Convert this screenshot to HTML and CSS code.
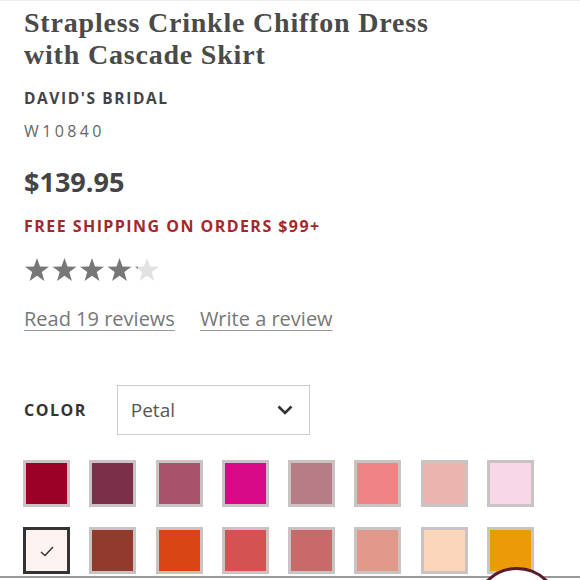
FILE: index.html
```html
<!DOCTYPE html>
<html>
<head>
<meta charset="utf-8">
<link rel="stylesheet" href="styles.css">
</head>
<body>
<div class="page">
  <h1 class="title">Strapless Crinkle Chiffon Dress<br>with Cascade Skirt</h1>
  <div class="brand">DAVID'S BRIDAL</div>
  <div class="sku">W10840</div>
  <div class="price">$139.95</div>
  <div class="ship">FREE SHIPPING ON ORDERS $99+</div>
  <div class="stars">
    <svg width="140" height="26" viewBox="0 0 140 26">
      <defs>
        <path id="st" d="M13 1 L16 9.6 L25 9.7 L17.8 15.1 L20.4 24 L13 18.8 L5.6 24 L8.2 15.1 L1 9.7 L10 9.6 Z"/>
        <linearGradient id="part" x1="0" x2="1" y1="0" y2="0">
          <stop offset="0.12" stop-color="#7a7a7a"/>
          <stop offset="0.12" stop-color="#e2e2e2"/>
        </linearGradient>
      </defs>
      <use href="#st" x="0" fill="#777"/>
      <use href="#st" x="27.5" fill="#777"/>
      <use href="#st" x="55" fill="#777"/>
      <use href="#st" x="82.5" fill="#777"/>
      <use href="#st" x="110" fill="url(#part)"/>
    </svg>
  </div>
  <div class="links">
    <a class="link">Read 19 reviews</a>
    <a class="link">Write a review</a>
  </div>
  <div class="color-row">
    <span class="color-label">COLOR</span>
    <div class="select">
      <span>Petal</span>
      <svg width="16" height="10" viewBox="0 0 16 10"><path d="M1.5 1.5 L8 8 L14.5 1.5" fill="none" stroke="#333" stroke-width="2.6"/></svg>
    </div>
  </div>
  <div class="swatches">
    <div class="sw" style="background:#9b0127"></div>
    <div class="sw" style="background:#7b2f49"></div>
    <div class="sw" style="background:#a9536a"></div>
    <div class="sw" style="background:#d90a87"></div>
    <div class="sw" style="background:#b67d87"></div>
    <div class="sw" style="background:#f08485"></div>
    <div class="sw" style="background:#e9b4ad"></div>
    <div class="sw" style="background:#f8d7e7"></div>
    <div class="sw selected"><svg width="14" height="11" viewBox="0 0 14 11"><path d="M1 6 L5 9.5 L13 1" fill="none" stroke="#333" stroke-width="1.4"/></svg></div>
    <div class="sw" style="background:#923a2e"></div>
    <div class="sw" style="background:#d94616"></div>
    <div class="sw" style="background:#d55252"></div>
    <div class="sw" style="background:#c96a6a"></div>
    <div class="sw" style="background:#e0998b"></div>
    <div class="sw" style="background:#fbd6bb"></div>
    <div class="sw" style="background:#ec9b06"></div>
  </div>
</div>
<div class="bottom-line"></div>
<div class="fab-clip"><div class="fab"></div></div>
</body>
</html>
```
FILE: styles.css
```css
html, body {
  margin: 0;
  padding: 0;
  background: #fff;
  overflow: hidden;
}
body {
  width: 580px;
  height: 580px;
  position: relative;
  border-top: 1px solid #eee;
  box-sizing: border-box;
}
.page {
  padding: 6px 0 0 24px;
  height: 573px;
  box-sizing: border-box;
  overflow: hidden;
  font-family: "Open Sans", sans-serif;
  color: #444;
}
.title {
  margin: 0;
  font-family: "Liberation Serif", serif;
  font-weight: bold;
  font-size: 28px;
  line-height: 32px;
  color: #4a4a4a;
  letter-spacing: 0.8px;
}
.brand {
  margin-top: 17px;
  font-weight: 700;
  font-size: 15.5px;
  line-height: 20px;
  letter-spacing: 1.6px;
  color: #444;
}
.sku {
  margin-top: 13px;
  font-size: 16px;
  line-height: 20px;
  letter-spacing: 3.4px;
  color: #666;
}
.price {
  margin-top: 25px;
  font-weight: 700;
  font-size: 27px;
  line-height: 32px;
  color: #444;
}
.ship {
  margin-top: 18px;
  font-weight: 700;
  font-size: 16px;
  line-height: 20px;
  letter-spacing: 1.45px;
  color: #a3282b;
}
.stars {
  margin-top: 21px;
  height: 26px;
}
.stars svg { display: block; }
.links {
  margin-top: 23px;
  display: flex;
  gap: 25px;
  font-size: 20px;
  line-height: 26px;
}
.link {
  color: #777;
  text-decoration: underline;
  text-decoration-color: #999;
  text-underline-offset: 4px;
  text-decoration-thickness: 1px;
}
.color-row {
  margin-top: 53px;
  display: flex;
  align-items: center;
  gap: 30px;
}
.color-label {
  font-weight: 700;
  font-size: 16px;
  letter-spacing: 1.5px;
  color: #333;
}
.select {
  box-sizing: border-box;
  width: 193px;
  height: 50px;
  border: 1px solid #ccc;
  display: flex;
  align-items: center;
  justify-content: space-between;
  padding: 0 16px 0 13px;
  font-size: 19px;
  color: #555;
}
.select svg { display: block; }
.swatches {
  margin-top: 25px;
  margin-left: -1px;
  display: grid;
  grid-template-columns: repeat(8, 47px);
  column-gap: 19.3px;
  row-gap: 20px;
}
.sw {
  box-sizing: border-box;
  width: 47px;
  height: 47px;
  border: 3px solid #c9c3c3;
}
.sw.selected {
  border-color: #333;
  background: #fdf3f1;
  display: flex;
  align-items: center;
  justify-content: center;
}
.sw.selected svg { display: block; margin-top: 2px; }
.bottom-line {
  position: absolute;
  left: 0;
  right: 0;
  top: 575px;
  height: 2px;
  background: #999;
}
.fab-clip {
  position: absolute;
  left: 470px;
  top: 564px;
  width: 100px;
  height: 15px;
  overflow: hidden;
}
.fab {
  margin: 2px 0 0 4px;
  width: 86px;
  height: 86px;
  border-radius: 50%;
  border: 3px solid #5b1a2b;
  background: #fff;
  box-sizing: border-box;
}
```
